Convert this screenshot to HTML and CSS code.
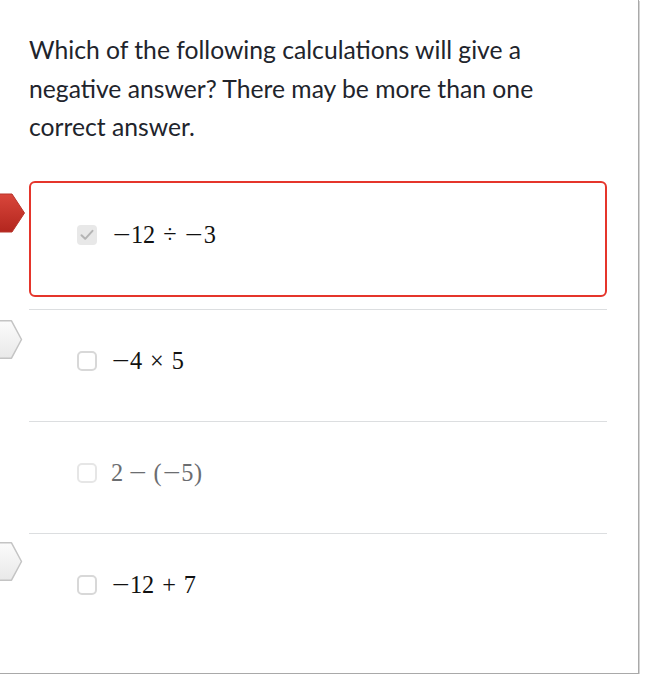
FILE: index.html
```html
<!DOCTYPE html>
<html lang="en">
<head>
<meta charset="utf-8">
<title>Question</title>
<link rel="stylesheet" href="styles.css">
</head>
<body>
<div class="card">
  <p class="question">Which of the following calculations will give a negative answer? There may be more than one correct answer.</p>
  <div class="options">
    <div class="option selected">
      <svg class="marker" width="26" height="40" viewBox="0 0 26 40">
        <defs>
          <linearGradient id="rg" x1="0" y1="0" x2="0" y2="1">
            <stop offset="0" stop-color="#d9463b"/>
            <stop offset="1" stop-color="#b3261e"/>
          </linearGradient>
        </defs>
        <polygon points="-4,1 12,1 24.5,20 12,39 -4,39" fill="url(#rg)" stroke="#b8342b" stroke-width="1" stroke-linejoin="round"/>
      </svg>
      <span class="box checked">
        <svg width="14" height="12" viewBox="0 0 14 12"><path d="M1.5 6.2 L5.2 9.8 L12.5 1.8" fill="none" stroke="#b4b4b4" stroke-width="2" stroke-linecap="round" stroke-linejoin="round"/></svg>
      </span>
      <span class="math"><span class="op"><span class="minus">−</span></span>12<span class="op bin">÷</span><span class="op"><span class="minus">−</span></span>3</span>
    </div>
    <div class="option">
      <svg class="marker grey" width="24" height="40" viewBox="0 0 24 40">
        <defs>
          <linearGradient id="gg" x1="0" y1="0" x2="0" y2="1">
            <stop offset="0" stop-color="#fbfbfb"/>
            <stop offset="1" stop-color="#e9e9e9"/>
          </linearGradient>
        </defs>
        <polygon points="-4,0.8 11.5,0.8 21.5,19.5 11.5,38.2 -4,38.2" fill="url(#gg)" stroke="#c4c4c4" stroke-width="1.5" stroke-linejoin="round"/>
      </svg>
      <span class="box"></span>
      <span class="math"><span class="op"><span class="minus">−</span></span>4<span class="op bin">×</span>5</span>
    </div>
    <div class="option faded">
      <span class="box"></span>
      <span class="math">2<span class="op bin"><span class="minus">−</span></span><span class="paren">(</span><span class="op"><span class="minus">−</span></span>5<span class="paren">)</span></span>
    </div>
    <div class="option">
      <svg class="marker grey last" width="24" height="40" viewBox="0 0 24 40">
        <defs>
          <linearGradient id="gg2" x1="0" y1="0" x2="0" y2="1">
            <stop offset="0" stop-color="#fbfbfb"/>
            <stop offset="1" stop-color="#e9e9e9"/>
          </linearGradient>
        </defs>
        <polygon points="-4,0.8 11.5,0.8 21.5,19.5 11.5,38.2 -4,38.2" fill="url(#gg2)" stroke="#c4c4c4" stroke-width="1.5" stroke-linejoin="round"/>
      </svg>
      <span class="box"></span>
      <span class="math"><span class="op"><span class="minus">−</span></span>12<span class="op bin">+</span>7</span>
    </div>
  </div>
</div>
</body>
</html>
```

FILE: styles.css
```css
html, body {
  margin: 0;
  padding: 0;
  background: #ffffff;
}

.card {
  width: 609px;
  height: 642px;
  padding: 31px 0 0 29px;
  border-right: 1px solid #a9a9a9;
  border-bottom: 1px solid #a9a9a9;
  box-shadow: 1px 1px 0 #d4d4d4;
  overflow: hidden;
}

.question {
  margin: 0;
  max-width: 560px;
  font-family: Lato, "Open Sans", sans-serif;
  font-size: 24.7px;
  line-height: 38.5px;
  color: #21242c;
}

.options {
  width: 578px;
  margin-top: 34px;
  display: flex;
  flex-direction: column;
}

.option {
  position: relative;
  height: 103px;
  padding: 0 0 8px 48px;
  border-top: 1px solid #dcdee0;
  display: flex;
  align-items: center;
  gap: 14px;
}

.option.selected {
  height: 105px;
  padding: 0 0 7px 46px;
  border: 2px solid #e5352b;
  border-radius: 6px;
  margin-bottom: 12px;
  gap: 15px;
}

.marker {
  position: absolute;
  left: -31px;
  top: 10px;
}

.marker.grey {
  left: -29px;
  top: 10px;
}

.marker.grey.last {
  top: 8px;
}

.box {
  width: 16px;
  height: 16px;
  border: 2px solid #d8d8d8;
  border-radius: 5px;
  background: #ffffff;
  display: flex;
  align-items: center;
  justify-content: center;
  flex: none;
}

.box.checked {
  width: 20px;
  height: 20px;
  border: none;
  border-radius: 4px;
  background: #e8e8e8;
}

.math {
  font-family: "Liberation Serif", "Times New Roman", serif;
  font-size: 24.3px;
  color: #111111;
  white-space: nowrap;
  line-height: 1;
}

.op {
  display: inline-block;
  width: 0.778em;
  text-align: center;
}

.minus {
  display: inline-block;
  transform: scaleX(1.3);
}

.bin {
  margin: 0 0.222em;
}

.paren {
  display: inline-block;
  width: 0.389em;
  text-align: center;
}

.option.faded .math {
  color: #6b6d70;
}

.option.faded .box {
  border-color: #e6e6e6;
}
```
